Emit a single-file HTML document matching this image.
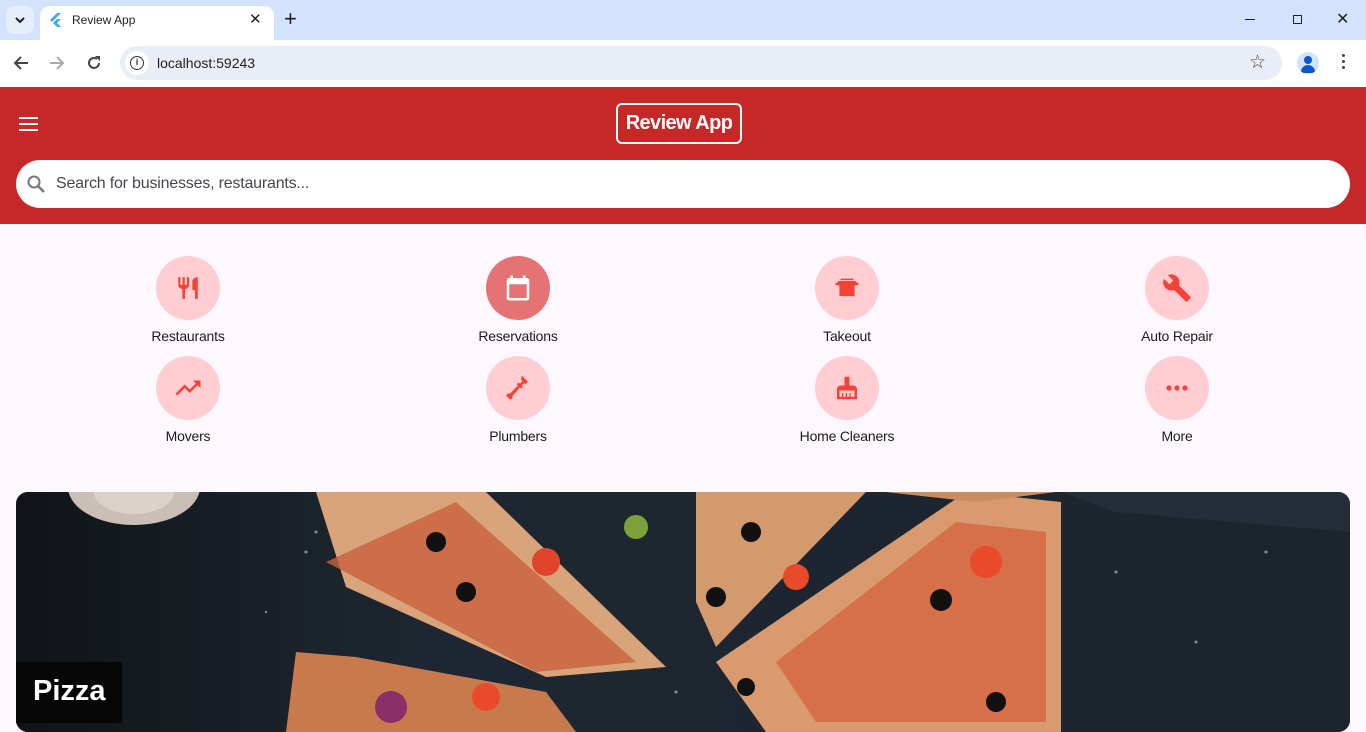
<!DOCTYPE html>
<html><head><meta charset="utf-8"><style>
*{margin:0;padding:0;box-sizing:border-box}
body{width:1366px;height:723px;overflow:hidden;font-family:"Liberation Sans",sans-serif;background:#fdf7fe;position:relative}
.abs{position:absolute}
.tabbar{left:0;top:0;width:1366px;height:40px;background:#d3e3fd}
.tab{left:40px;top:6px;width:234px;height:34px;background:#fff;border-radius:10px 10px 0 0}
.toolbar{left:0;top:40px;width:1366px;height:47px;background:#fff}
.omni{left:120px;top:46px;width:1162px;height:34px;background:#e9eef6;border-radius:17px}
.app{left:0;top:87px;width:1366px;height:137px;background:#c62828}
.title{left:616px;top:103px;width:126px;height:41px;border:2px solid #fff;border-radius:6px;color:#fff;font-weight:bold;font-size:20px;line-height:37px;text-align:center;letter-spacing:-0.6px}
.search{left:16px;top:160px;width:1334px;height:48px;background:#fff;border-radius:24px}
.search span{position:absolute;left:40px;top:15px;font-size:16px;color:#49454f;letter-spacing:-0.2px}
.cat{width:200px;text-align:center}
.circ{width:64px;height:64px;border-radius:50%;background:#ffcdd2;margin:0 auto;display:flex;align-items:center;justify-content:center}
.cat p{font-size:14px;color:#1d1b20;margin-top:8px;letter-spacing:-0.2px}
.img{left:16px;top:492px;width:1334px;height:240px;border-radius:12px;overflow:hidden;background:#1d252d}
.lbl{left:16px;top:662px;width:106px;height:61px;background:#060606;color:#fff;font-size:29px;font-weight:bold;padding:13px 0 0 17px}
</style></head><body>
<div class="abs tabbar"></div>
<div class="abs" style="left:6px;top:6px;width:28px;height:28px;background:#e6eefc;border-radius:8px"></div>
<svg class="abs" style="left:13px;top:13px" width="14" height="14"><path d="M3 5l4 4 4-4" stroke="#1f1f1f" stroke-width="2" fill="none"/></svg>
<div class="abs tab"></div>
<svg class="abs" style="left:50px;top:13px" width="12" height="14"><path d="M7 0L0 7l2 2 9-9z M7 6L3 10l4 4h4L7 10l4-4z" fill="#42a5f5"/></svg>
<div class="abs" style="left:72px;top:13px;font-size:12px;color:#1f1f1f">Review App</div>
<div class="abs" style="left:249px;top:10px;font-size:15px;color:#1f1f1f">✕</div>
<div class="abs" style="left:284px;top:6px;font-size:22px;color:#1f1f1f">+</div>
<div class="abs" style="left:1245px;top:19px;width:10px;height:1px;background:#1f1f1f"></div>
<div class="abs" style="left:1293px;top:15px;width:9px;height:9px;border:1px solid #1f1f1f"></div>
<div class="abs" style="left:1336px;top:9px;font-size:16px;color:#1f1f1f">✕</div>
<div class="abs toolbar"></div>
<svg class="abs" style="left:12px;top:54px" width="18" height="18"><path d="M16 9H3M9 3L3 9l6 6" stroke="#444" stroke-width="2" fill="none"/></svg>
<svg class="abs" style="left:48px;top:54px" width="18" height="18"><path d="M2 9h13M9 3l6 6-6 6" stroke="#aaa" stroke-width="2" fill="none"/></svg>
<svg class="abs" style="left:85px;top:54px" width="18" height="18"><path d="M14 9a5 5 0 1 1-2-4" stroke="#444" stroke-width="2" fill="none"/><path d="M10 2h5v5z" fill="#444"/></svg>
<div class="abs omni"></div>
<div class="abs" style="left:125px;top:51px;width:24px;height:24px;border-radius:50%;background:#fff"></div>
<div class="abs" style="left:130px;top:56px;width:14px;height:14px;border-radius:50%;border:1.5px solid #333;font-size:9px;text-align:center;line-height:11px;font-weight:bold;color:#333">i</div>
<div class="abs" style="left:157px;top:55px;font-size:14px;color:#1f1f1f">localhost:59243</div>
<div class="abs" style="left:1249px;top:51px;font-size:19px;color:#444">☆</div>
<div class="abs" style="left:1297px;top:52px;width:22px;height:22px;border-radius:50%;background:#d3e3fd;overflow:hidden"><div style="position:absolute;left:7px;top:4px;width:8px;height:8px;border-radius:50%;background:#0b57d0"></div><div style="position:absolute;left:4px;top:13px;width:14px;height:8px;border-radius:7px 7px 0 0;background:#0b57d0"></div></div>
<div class="abs" style="left:1342px;top:54px;width:3px;height:3px;border-radius:50%;background:#444;box-shadow:0 6px 0 #444,0 12px 0 #444"></div>

<div class="abs app"></div>
<div class="abs" style="left:19px;top:117px;width:19px;height:2px;background:#fff;box-shadow:0 6px 0 #fff,0 12px 0 #fff"></div>
<div class="abs title">Review App</div>
<div class="abs search"><svg style="position:absolute;left:10px;top:14px" width="20" height="20"><circle cx="8" cy="8" r="5.5" stroke="#777" stroke-width="2" fill="none"/><path d="M12 12l6 6" stroke="#777" stroke-width="2.5"/></svg><span>Search for businesses, restaurants...</span></div>

<div class="abs cat" style="left:88px;top:256px"><div class="circ"><svg width="26" height="26" viewBox="0 0 24 24"><path fill="#f44336" d="M11 9H9V2H7v7H5V2H3v7c0 2.1 1.7 3.8 3.8 4V22h2.5v-9c2-.2 3.7-1.9 3.7-4V2h-2v7zm5-3v8h2.5v8H21V2c-2.8 0-5 2.2-5 4z"/></svg></div><p>Restaurants</p></div>
<div class="abs cat" style="left:418px;top:256px"><div class="circ" style="background:#e57373"><svg width="30" height="30" viewBox="0 0 24 24"><path fill="#fff" d="M19 4h-1V2h-2v2H8V2H6v2H5c-1.1 0-2 .9-2 2v14c0 1.1.9 2 2 2h14c1.1 0 2-.9 2-2V6c0-1.1-.9-2-2-2zm0 16H5V9h14v11z"/></svg></div><p>Reservations</p></div>
<div class="abs cat" style="left:747px;top:256px"><div class="circ"><svg width="28" height="28" viewBox="0 0 24 24"><path fill="#f44336" d="M2 8c1.2 0 2-1 2.6-2h14.8c.6 1 1.4 2 2.6 2v1.3l-3.5.7V19H5.5V10L2 9.3zM7 4h10l1 1.2H6z"/></svg></div><p>Takeout</p></div>
<div class="abs cat" style="left:1077px;top:256px"><div class="circ"><svg width="30" height="30" viewBox="0 0 24 24"><path fill="#f44336" d="M22.7 19l-9.1-9.1c.9-2.3.4-5-1.5-6.9-2-2-5-2.4-7.4-1.3L9 6 6 9 1.6 4.7C.4 7.1.9 10.1 2.9 12.1c1.9 1.9 4.6 2.4 6.9 1.5l9.1 9.1c.4.4 1 .4 1.4 0l2.3-2.3c.5-.4.5-1.1.1-1.4z"/></svg></div><p>Auto Repair</p></div>

<div class="abs cat" style="left:88px;top:356px"><div class="circ"><svg width="30" height="30" viewBox="0 0 24 24"><path fill="#f44336" d="M16 6l2.3 2.3-4.9 4.9-4-4L2 16.6 3.4 18l6-6 4 4 6.3-6.3L22 12V6z"/></svg></div><p>Movers</p></div>
<div class="abs cat" style="left:418px;top:356px"><div class="circ"><svg width="30" height="30" viewBox="0 0 24 24"><path fill="#f44336" d="M15 2l5 5-2 2-1-1-2 2 1 1-1.5 1.5-1-1L7.5 18.5l.2 1.5L6 21.5 2.5 18 4 16.3l1.5.2L12 10l-1-1L12.5 7.5l1 1 2-2-1-1z"/></svg></div><p>Plumbers</p></div>
<div class="abs cat" style="left:747px;top:356px"><div class="circ"><svg width="30" height="30" viewBox="0 0 24 24"><path fill="#f44336" d="M10 3h4v7h3c1.7 0 3 1.3 3 3v8H4v-8c0-1.7 1.3-3 3-3h3zM6 14v5h2v-3h1v3h2v-3h1v3h2v-3h1v3h3v-5z"/></svg></div><p>Home Cleaners</p></div>
<div class="abs cat" style="left:1077px;top:356px"><div class="circ"><svg width="26" height="8"><circle cx="5" cy="4" r="2.6" fill="#f44336"/><circle cx="13" cy="4" r="2.6" fill="#f44336"/><circle cx="21" cy="4" r="2.6" fill="#f44336"/></svg></div><p>More</p></div>

<div class="abs img"><svg width="1334" height="240">
<defs><linearGradient id="g" x1="0" x2="1"><stop offset="0" stop-color="#101418"/><stop offset=".3" stop-color="#1e2731"/><stop offset="1" stop-color="#1c252e"/></linearGradient></defs>
<rect width="1334" height="240" fill="url(#g)"/>
<ellipse cx="118" cy="-5" rx="66" ry="38" fill="#c9bfb6"/>
<ellipse cx="118" cy="0" rx="40" ry="22" fill="#ddd2ca"/>
<polygon points="300,0 470,0 650,175 530,185 330,95" fill="#d9a47a"/>
<polygon points="310,70 440,10 620,170 520,180" fill="#c9603e" opacity=".8"/>
<polygon points="280,160 340,165 530,200 560,240 270,240" fill="#c97a4d"/>
<polygon points="680,0 850,0 700,155 680,110" fill="#d39a6e"/>
<polygon points="700,170 950,0 1045,10 1045,240 750,240" fill="#d99a70"/>
<polygon points="760,170 940,30 1030,40 1030,230 800,230" fill="#d4603d" opacity=".75"/>
<polygon points="870,0 1040,0 960,10" fill="#c98e60"/>
<polygon points="1045,0 1334,0 1334,40 1100,20" fill="#252e38"/>
<circle cx="420" cy="50" r="10" fill="#111"/><circle cx="450" cy="100" r="10" fill="#111"/><circle cx="735" cy="40" r="10" fill="#111"/><circle cx="700" cy="105" r="10" fill="#111"/><circle cx="925" cy="108" r="11" fill="#111"/><circle cx="730" cy="195" r="9" fill="#111"/><circle cx="980" cy="210" r="10" fill="#111"/>
<circle cx="530" cy="70" r="14" fill="#e0452b"/><circle cx="780" cy="85" r="13" fill="#e84a2a"/><circle cx="970" cy="70" r="16" fill="#e84a2a"/><circle cx="470" cy="205" r="14" fill="#e84a2a"/><circle cx="620" cy="35" r="12" fill="#7ea13a"/><circle cx="375" cy="215" r="16" fill="#8a2f6a"/>
<g fill="#cfd6dc" opacity=".6"><circle cx="300" cy="40" r="1.5"/><circle cx="290" cy="60" r="1.5"/><circle cx="1100" cy="80" r="1.5"/><circle cx="1180" cy="150" r="1.5"/><circle cx="1250" cy="60" r="1.5"/><circle cx="660" cy="200" r="1.5"/><circle cx="250" cy="120" r="1.2"/></g>
</svg></div>
<div class="abs lbl">Pizza</div>
</body></html>
